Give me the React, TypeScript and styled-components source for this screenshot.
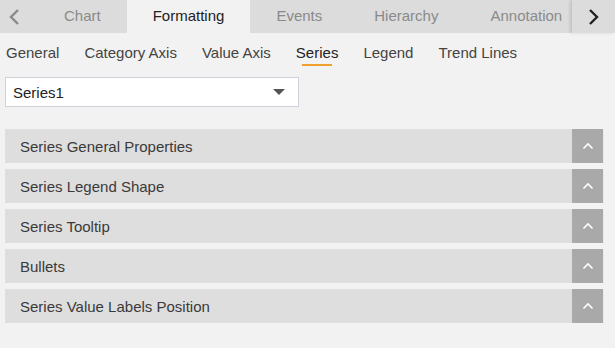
import React, { useState } from "react";
import styled, { createGlobalStyle } from "styled-components";

const GlobalStyle = createGlobalStyle`
  html, body {
    margin: 0;
    padding: 0;
    background: #f2f2f2;
    font-family: "Liberation Sans", Arial, sans-serif;
  }
`;

const Page = styled.div`
  width: 615px;
  height: 348px;
  background: #f2f2f2;
  overflow: hidden;
`;

const TabBar = styled.div`
  display: flex;
  height: 33px;
  background: #dcdcdc;
`;

const ArrowButton = styled.div<{ $side: "left" | "right" }>`
  flex: none;
  width: ${(p) => (p.$side === "left" ? "38px" : "43px")};
  display: flex;
  align-items: center;
  justify-content: ${(p) => (p.$side === "left" ? "flex-start" : "center")};
  padding-left: ${(p) => (p.$side === "left" ? "7px" : "0")};
  box-sizing: border-box;
  background: #dcdcdc;
  box-shadow: ${(p) => (p.$side === "right" ? "-2px 0 3px rgba(0,0,0,0.12)" : "none")};
  position: relative;
  z-index: 1;
`;

const TabStrip = styled.div`
  flex: 1;
  display: flex;
  overflow: hidden;
`;

const Tab = styled.div<{ $active: boolean }>`
  flex: none;
  padding: 0 26px;
  height: 33px;
  line-height: 31px;
  font-size: 15px;
  color: ${(p) => (p.$active ? "#222" : "#8a8a8a")};
  background: ${(p) => (p.$active ? "#f2f2f2" : "transparent")};
  cursor: pointer;
`;

const SubTabs = styled.div`
  display: flex;
  gap: 25px;
  padding: 0 6px;
  height: 38px;
  align-items: center;
`;

const SubTab = styled.div<{ $active: boolean }>`
  position: relative;
  font-size: 15px;
  color: ${(p) => (p.$active ? "#222" : "#444")};
  padding-top: 1px;
  cursor: pointer;

  &::after {
    content: "";
    display: ${(p) => (p.$active ? "block" : "none")};
    position: absolute;
    left: 15%;
    right: 15%;
    bottom: -5px;
    height: 2px;
    background: #f0a030;
  }
`;

const Select = styled.div`
  margin: 6px 0 0 5px;
  width: 294px;
  height: 30px;
  box-sizing: border-box;
  border: 1px solid #cdd1da;
  background: #fff;
  display: flex;
  align-items: center;
  justify-content: space-between;
  padding: 0 13px 0 7px;
  font-size: 15px;
  color: #222;
`;

const Caret = styled.span`
  width: 0;
  height: 0;
  border-left: 6px solid transparent;
  border-right: 6px solid transparent;
  border-top: 6px solid #555;
`;

const PanelList = styled.div`
  display: flex;
  flex-direction: column;
  gap: 6px;
  margin: 22px 0 0 5px;
  width: 599px;
`;

const Panel = styled.div`
  display: flex;
  height: 34px;
  background: #dedede;
  border-right: 1px solid #e9e9e9;
`;

const PanelTitle = styled.div`
  flex: 1;
  padding-left: 15px;
  display: flex;
  align-items: center;
  font-size: 15px;
  color: #3a3a3a;
`;

const ToggleButton = styled.div`
  flex: none;
  width: 31px;
  background: #a9a9a9;
  display: flex;
  align-items: center;
  justify-content: center;
`;

const tabs = ["Chart", "Formatting", "Events", "Hierarchy", "Annotation"];
const subTabs = ["General", "Category Axis", "Value Axis", "Series", "Legend", "Trend Lines"];
const panels = [
  "Series General Properties",
  "Series Legend Shape",
  "Series Tooltip",
  "Bullets",
  "Series Value Labels Position",
];

export default function App() {
  const [tab, setTab] = useState("Formatting");
  const [sub, setSub] = useState("Series");

  return (
    <Page>
      <GlobalStyle />
      <TabBar>
        <ArrowButton $side="left">
          <svg width="14" height="18" viewBox="0 0 14 18">
            <path d="M11 2 L4 9 L11 16" fill="none" stroke="#8a8a8a" strokeWidth="2.4" />
          </svg>
        </ArrowButton>
        <TabStrip>
          {tabs.map((t) => (
            <Tab key={t} $active={t === tab} onClick={() => setTab(t)}>
              {t}
            </Tab>
          ))}
        </TabStrip>
        <ArrowButton $side="right">
          <svg width="14" height="18" viewBox="0 0 14 18">
            <path d="M3 2 L10 9 L3 16" fill="none" stroke="#222" strokeWidth="2.4" />
          </svg>
        </ArrowButton>
      </TabBar>
      <SubTabs>
        {subTabs.map((s) => (
          <SubTab key={s} $active={s === sub} onClick={() => setSub(s)}>
            {s}
          </SubTab>
        ))}
      </SubTabs>
      <Select>
        <span>Series1</span>
        <Caret />
      </Select>
      <PanelList>
        {panels.map((p) => (
          <Panel key={p}>
            <PanelTitle>{p}</PanelTitle>
            <ToggleButton>
              <svg width="12" height="8" viewBox="0 0 12 8">
                <path d="M1.5 6.5 L6 2 L10.5 6.5" fill="none" stroke="#fff" strokeWidth="1.6" />
              </svg>
            </ToggleButton>
          </Panel>
        ))}
      </PanelList>
    </Page>
  );
}
